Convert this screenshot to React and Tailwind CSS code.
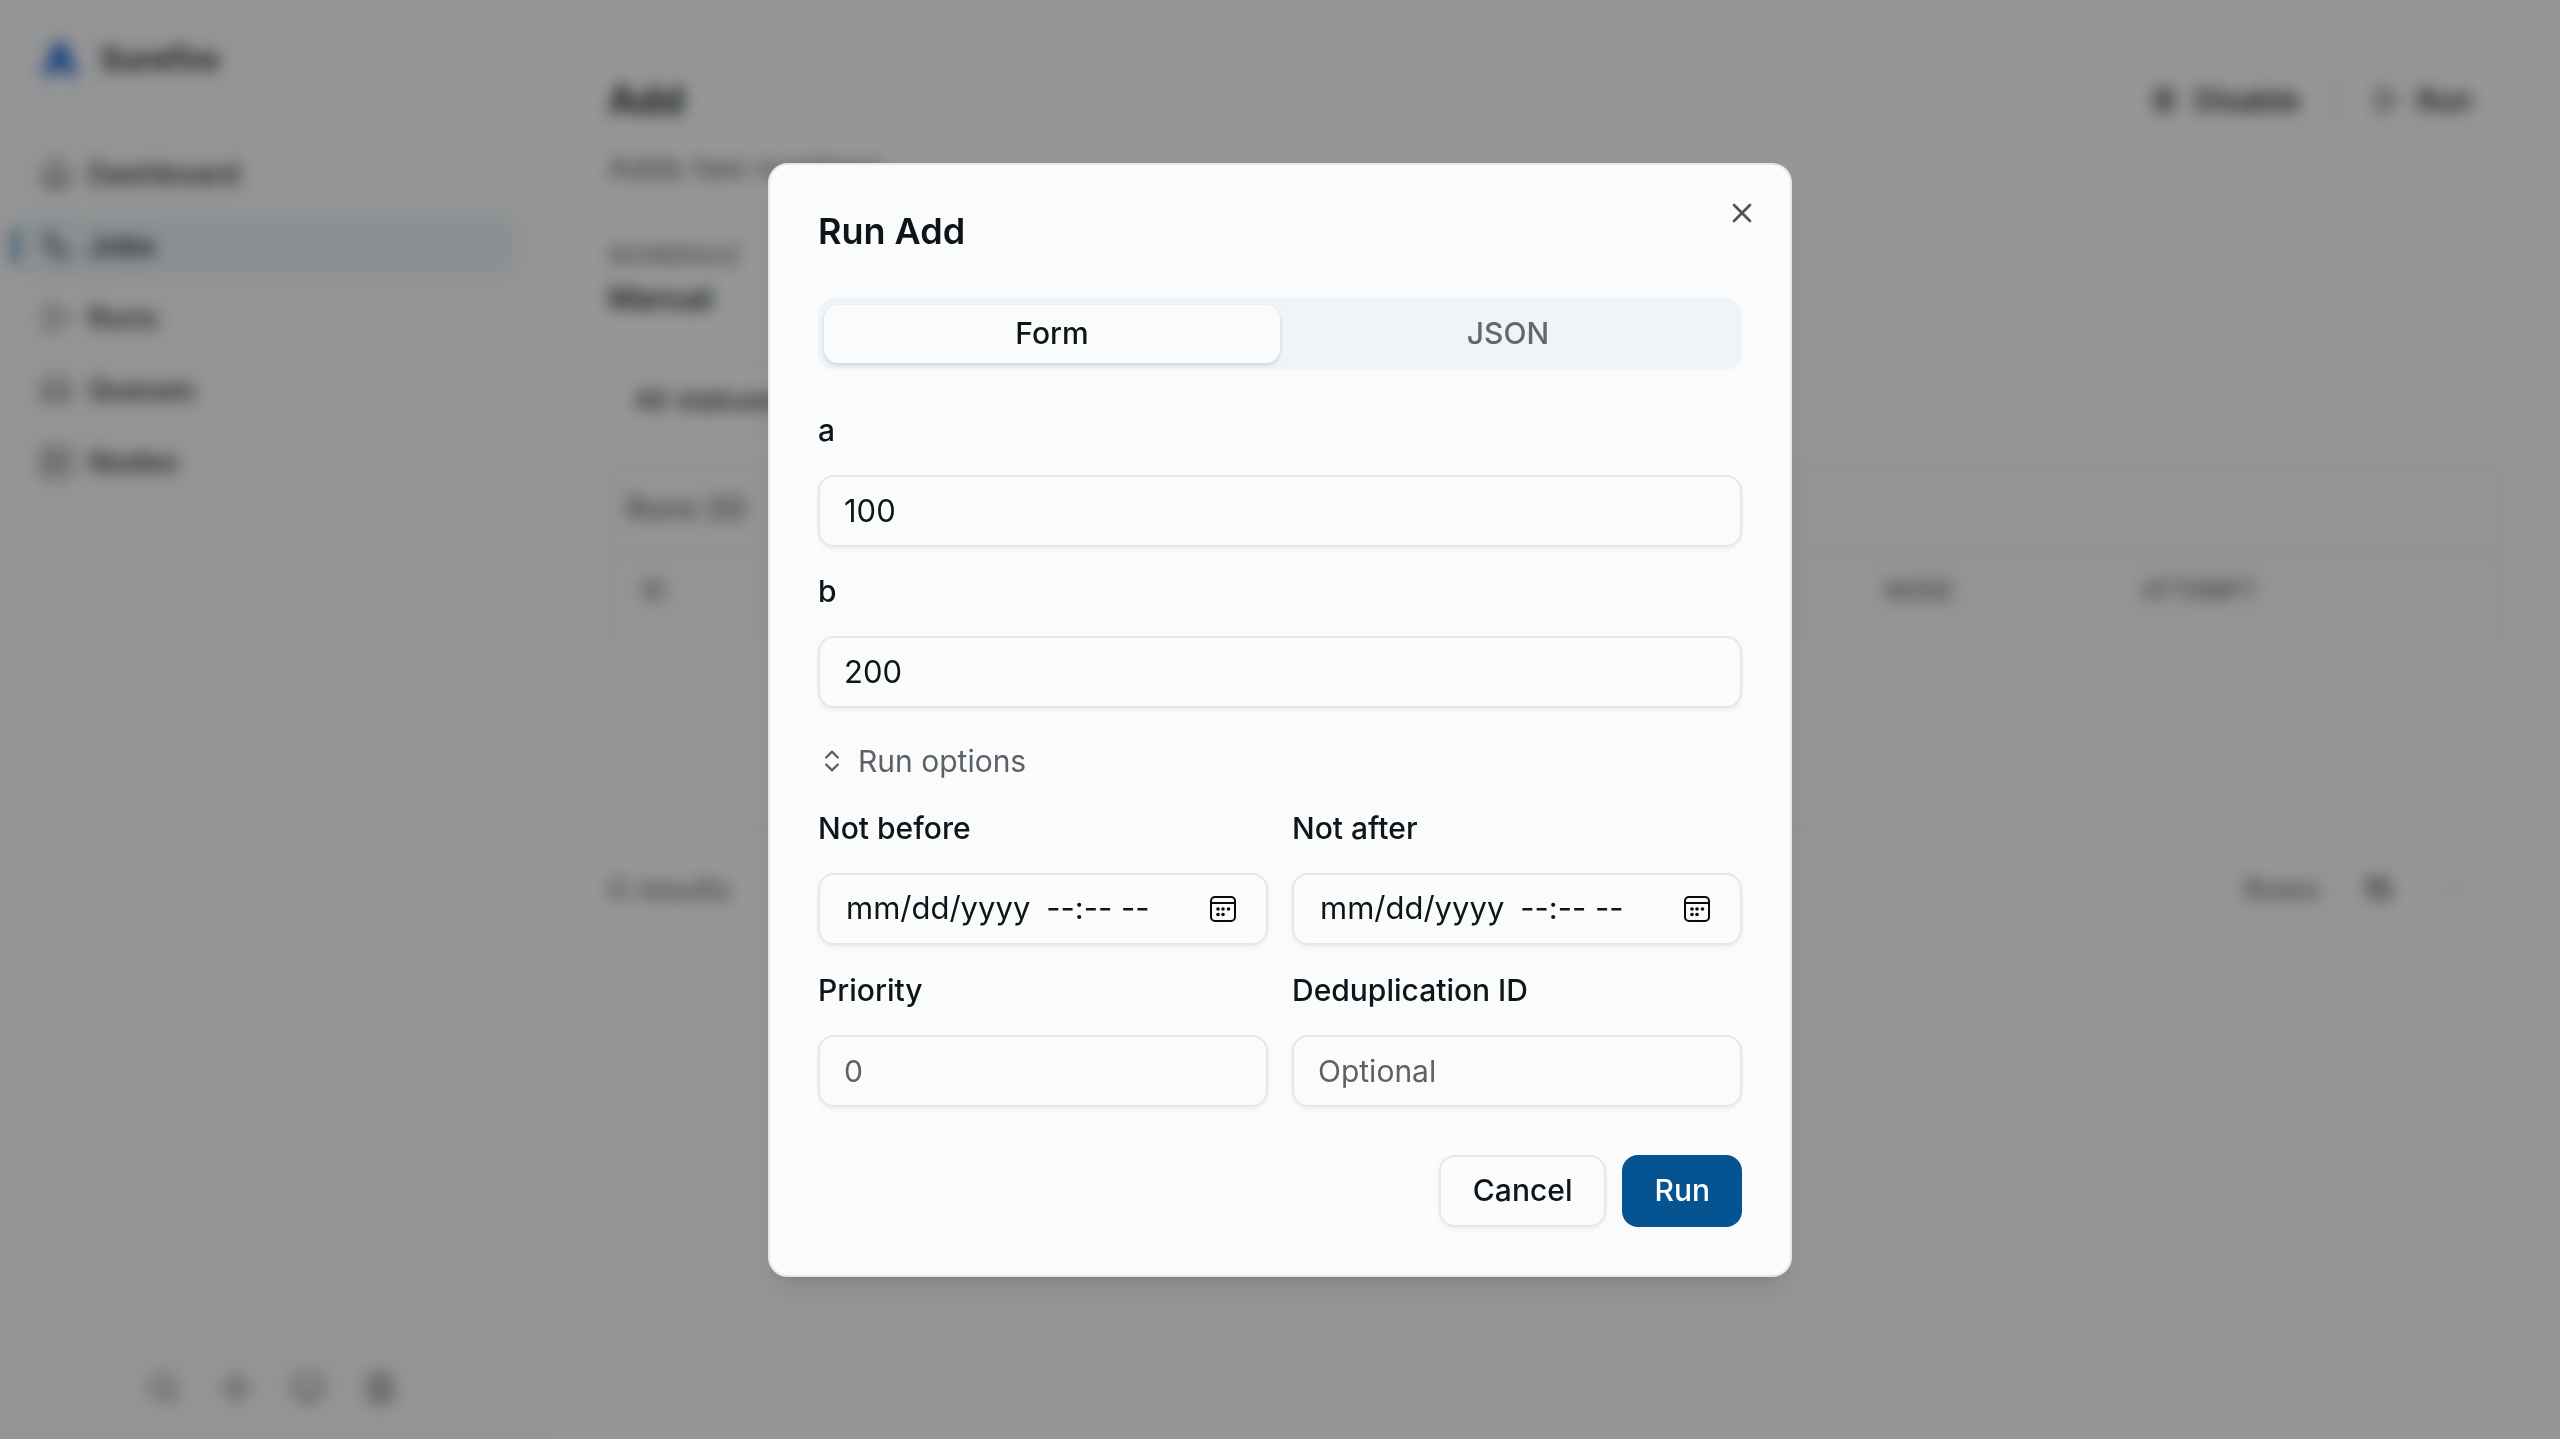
import React, { useState } from 'react';
import {
  ChevronDown,
  ChevronsUpDown,
  FileText,
  House,
  Inbox,
  Monitor,
  Pause,
  Play,
  Search,
  Server,
  Sun,
  Workflow,
  X,
} from 'lucide-react';

const navItems = [
  { label: 'Dashboard', icon: House },
  { label: 'Jobs', icon: Workflow, active: true },
  { label: 'Runs', icon: Play },
  { label: 'Queues', icon: Inbox },
  { label: 'Nodes', icon: Server },
];

const footerActions = [
  { label: 'Search', icon: Search },
  { label: 'Theme', icon: Sun },
  { label: 'Display', icon: Monitor },
  { label: 'Docs', icon: FileText },
];

const inputClass =
  'h-18 w-full rounded-2xl border-2 border-[#e5e7e9] bg-[#fafbfd] px-6 text-[31px] shadow-[0_2px_4px_rgba(0,0,0,0.06)] outline-none placeholder:text-[30px] placeholder:text-[#5d6163]';

const Logo = () => (
  <svg viewBox="0 0 40 40" className="h-10 w-10" fill="#2f6fd6" aria-hidden="true">
    <path d="M15 3h10l13 34H28l-3-7H15l-3 7H2z" />
  </svg>
);

const CalendarIcon = () => (
  <svg viewBox="0 0 28 28" className="h-7 w-7" fill="none" stroke="#0a0a0a" strokeWidth="2" aria-hidden="true">
    <rect x="2" y="2" width="24" height="24" rx="4" />
    <path d="M2 8h24" />
    <g fill="#0a0a0a" stroke="none">
      <circle cx="9" cy="14" r="1.8" />
      <circle cx="14" cy="14" r="1.8" />
      <circle cx="19.5" cy="14" r="1.8" />
      <circle cx="9" cy="19.5" r="1.8" />
      <circle cx="14" cy="19.5" r="1.8" />
    </g>
  </svg>
);

const Field = ({ id, label, children }) => (
  <div className="flex flex-col gap-6">
    <label htmlFor={id} className="text-[30px] leading-[41px] font-medium">
      {label}
    </label>
    {children}
  </div>
);

const DateField = ({ id, label }) => {
  const [value, setValue] = useState('');

  return (
    <Field id={id} label={label}>
      <div className="relative">
        <input
          id={id}
          type="datetime-local"
          value={value}
          onChange={(e) => setValue(e.target.value)}
          className={`${inputClass} [&::-webkit-calendar-picker-indicator]:opacity-0 ${
            value ? '' : '[&::-webkit-datetime-edit]:opacity-0'
          }`}
        />
        {/* Hint shown until a date is picked */}
        {!value && (
          <span className="pointer-events-none absolute inset-y-0 left-7 flex items-center gap-4 text-[31px]">
            <span>mm/dd/yyyy</span>
            <span>--:-- --</span>
          </span>
        )}
        <span className="pointer-events-none absolute inset-y-0 right-[31px] flex items-center">
          <CalendarIcon />
        </span>
      </div>
    </Field>
  );
};

const Sidebar = () => (
  <aside className="flex w-[552px] shrink-0 flex-col bg-[#f7f8fa]">
    <div className="flex h-[120px] items-center gap-5 border-b-2 border-[#f2f4f6] px-10">
      <Logo />
      <span className="text-[31px] font-semibold">Surefire</span>
    </div>
    <nav className="flex flex-1 flex-col gap-3 py-6 pr-9 pl-4">
      {navItems.map(({ label, icon: Icon, active }) => (
        <a
          key={label}
          href="#"
          className={`relative flex h-15 items-center gap-4 rounded-2xl px-6 text-[29px] font-medium ${
            active ? 'bg-[#e9f0f4] text-[#0f1416]' : 'text-[#24292b]'
          }`}
        >
          {active && <span className="absolute top-3 -left-1 h-9 w-1.5 rounded-full bg-[#3b7cab]" />}
          <Icon size={32} strokeWidth={1.5} />
          {label}
        </a>
      ))}
    </nav>
    <div className="flex h-[104px] items-center justify-center gap-2 border-t-2 border-[#f2f4f6] pr-2">
      {footerActions.map(({ label, icon: Icon }) => (
        <button key={label} type="button" aria-label={label} className="flex h-16 w-16 items-center justify-center">
          <Icon size={32} strokeWidth={2} className="text-[#5d6163]" />
        </button>
      ))}
    </div>
  </aside>
);

const JobPage = () => (
  <main className="flex min-w-0 flex-1 flex-col px-14 pt-16">
    <div className="flex items-center justify-between">
      <h1 className="text-[39px] leading-[72px] font-semibold">Add</h1>
      <div className="flex gap-2">
        <button
          type="button"
          className="flex h-18 items-center gap-4 rounded-2xl border-2 border-[#e5e7e9] px-[30px] text-[30px] font-medium"
        >
          <Pause size={28} />
          Disable
        </button>
        <button
          type="button"
          className="flex h-18 items-center gap-4 rounded-2xl border-2 border-[#e5e7e9] px-[30px] text-[30px] font-medium"
        >
          <Play size={28} strokeWidth={2} />
          Run
        </button>
      </div>
    </div>
    <p className="mt-2 text-[31px] leading-12 text-[#5d6163]">Adds two numbers</p>
    <div className="mt-12">
      <div className="text-2xl leading-8 font-medium tracking-wide text-[#5d6163]">SCHEDULE</div>
      <div className="mt-2 text-[30px] leading-9 font-medium">Manual</div>
    </div>
    <div className="mt-12 w-72">
      <select
        aria-label="Status"
        className="h-18 w-full appearance-none rounded-2xl border-2 border-[#e5e7e9] px-6 text-[29px]"
      >
        <option>All statuses</option>
      </select>
    </div>
    <section className="mt-6 rounded-2xl border-2 border-[#e5e7e9]">
      <h2 className="rounded-t-2xl bg-[#f7f8fa] px-4 text-[30px] leading-[92px] font-medium text-[#5d6163]">
        Runs (0)
      </h2>
      <table className="w-full table-fixed text-left">
        <thead>
          <tr className="h-[84px] border-y-2 border-[#eceef0] bg-[#f7f8fa] text-2xl text-[#5d6163]">
            <th className="w-[65.7%] px-8 pb-3 font-medium">ID</th>
            <th className="px-8 pb-3 font-medium">NODE</th>
            <th className="w-[20.7%] px-8 pb-3 font-medium">ATTEMPT</th>
          </tr>
        </thead>
        <tbody>
          <tr className="h-[188px]">
            <td colSpan={3} />
          </tr>
        </tbody>
      </table>
    </section>
    <div className="mt-6 flex items-center justify-between text-[30px] text-[#5d6163]">
      <span>0 results</span>
      <div className="flex items-center gap-4">
        <label htmlFor="rows">Rows</label>
        <div className="relative w-[168px]">
          <select
            id="rows"
            className="h-18 w-full appearance-none rounded-2xl border-2 border-[#e5e7e9] px-6 text-[#0f1416]"
          >
            <option>15</option>
          </select>
          <ChevronDown size={28} className="absolute top-[22px] right-9 text-[#b5b9bb]" />
        </div>
      </div>
    </div>
  </main>
);

const RunDialog = () => {
  const [tab, setTab] = useState('Form');
  const [a, setA] = useState('100');
  const [b, setB] = useState('200');
  const [showOptions, setShowOptions] = useState(true);

  return (
    <div
      role="dialog"
      aria-labelledby="dialog-title"
      className="relative w-full max-w-5xl rounded-[20px] border-2 border-[#e5e7e9] bg-[#fafbfd] p-12 shadow-[0_20px_30px_-6px_rgba(0,0,0,0.1),0_8px_12px_-8px_rgba(0,0,0,0.1)]"
    >
      <button type="button" aria-label="Close" className="absolute top-8 right-8">
        <X size={32} className="text-[#4f5355]" />
      </button>

      <h2 id="dialog-title" className="text-4xl leading-[37px] font-semibold">
        Run Add
      </h2>

      {/* Tabs */}
      <div role="tablist" className="mt-12 flex h-18 items-center rounded-2xl bg-[#f0f4f6] p-[6px]">
        {['Form', 'JSON'].map((name) => (
          <button
            key={name}
            type="button"
            role="tab"
            aria-selected={tab === name}
            onClick={() => setTab(name)}
            className={`h-[58px] flex-1 rounded-[14px] text-[30px] font-medium ${
              tab === name ? 'bg-[#fafbfd] shadow-[0_2px_4px_rgba(0,0,0,0.14)]' : 'text-[#64686a]'
            }`}
          >
            {name}
          </button>
        ))}
      </div>

      {/* Arguments */}
      <div className="mt-10 flex flex-col gap-6">
        <Field id="a" label="a">
          <input id="a" className={inputClass} value={a} onChange={(e) => setA(e.target.value)} />
        </Field>
        <Field id="b" label="b">
          <input id="b" className={inputClass} value={b} onChange={(e) => setB(e.target.value)} />
        </Field>
      </div>

      {/* Run options */}
      <button
        type="button"
        onClick={() => setShowOptions(!showOptions)}
        className="mt-[33px] flex items-center gap-3 text-[30px] leading-[41px] text-[#5d6163]"
      >
        <ChevronsUpDown size={28} strokeWidth={2} />
        Run options
      </button>
      {showOptions && (
        <div className="mt-[26px] grid grid-cols-2 gap-x-6 gap-y-[25px]">
          <DateField id="not-before" label="Not before" />
          <DateField id="not-after" label="Not after" />
          <Field id="priority" label="Priority">
            <input id="priority" className={inputClass} placeholder="0" />
          </Field>
          <Field id="dedup" label="Deduplication ID">
            <input id="dedup" className={inputClass} placeholder="Optional" />
          </Field>
        </div>
      )}

      <div className="mt-12 flex justify-end gap-4">
        <button
          type="button"
          className="h-18 rounded-2xl border-2 border-[#e5e7e9] px-8 text-[30px] font-medium shadow-[0_2px_4px_rgba(0,0,0,0.06)]"
        >
          Cancel
        </button>
        <button type="button" className="h-18 rounded-2xl bg-[#055491] px-8 text-[30px] font-medium text-white">
          Run
        </button>
      </div>
    </div>
  );
};

export default function App() {
  return (
    <div className="min-h-screen bg-[#f9fbfc] font-[Inter,sans-serif] text-[#0f1416]">
      <div className="flex min-h-screen">
        <Sidebar />
        <JobPage />
      </div>
      <div className="fixed inset-0 flex items-center justify-center bg-black/40 backdrop-blur-sm">
        <RunDialog />
      </div>
    </div>
  );
}
